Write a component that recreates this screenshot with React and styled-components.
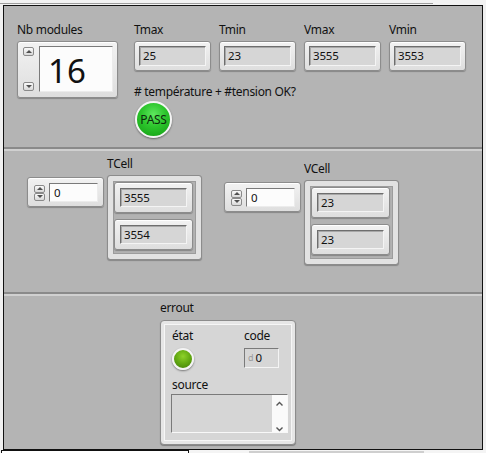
import React from "react";
import styled, { createGlobalStyle } from "styled-components";

const Global = createGlobalStyle`
  html, body { margin: 0; padding: 0; background: #f0f0f0; }
  body { font-family: "Noto Sans", "Open Sans", Arial, sans-serif; font-size: 12px; color: #111; }
  * { box-sizing: border-box; }
`;

const TopStrip = styled.div`
  height: 5px;
  background: #f2f2f2;
  border-bottom: 1px solid #f2f2f2;
  &::before {
    content: "";
    display: block;
    height: 3px;
    border-bottom: 1px solid #9e9e9e;
    margin-right: 53px;
  }
`;

const Frame = styled.div`
  margin-left: 3px;
  width: 480px;
  border: 1px solid #111;
  background: #b4b4b4;
  display: flex;
  flex-direction: column;
`;

const Pane = styled.div`
  height: ${(p) => p.$h}px;
  display: flex;
  align-items: flex-start;
  padding: ${(p) => p.$pad};
`;

const Splitter = styled.div`
  height: 4px;
  border-top: 2px solid #8a8a8a;
  background: #d0d0d0;
`;

const Label = styled.div`
  font-size: 12px;
  letter-spacing: -0.3px;
  line-height: 14px;
  height: 14px;
  white-space: nowrap;
  color: #111;
`;

const Group = styled.div`
  display: flex;
  flex-direction: column;
  gap: ${(p) => p.$gap ?? 4}px;
  margin-top: ${(p) => p.$mt ?? 0}px;
  margin-left: ${(p) => p.$ml ?? 0}px;
`;

const ControlFrame = styled.div`
  width: ${(p) => p.$w}px;
  height: ${(p) => p.$h}px;
  padding: ${(p) => p.$pad ?? "4px"};
  border: 1px solid #8c8c8c;
  border-radius: 3px;
  background: linear-gradient(#f2f2f2, #dedede);
  box-shadow: inset 0 1px 0 #ffffff, 0 1px 1px rgba(0, 0, 0, 0.25);
  display: flex;
  align-items: stretch;
  gap: ${(p) => p.$gap ?? 0}px;
`;

const IndicatorField = styled.div`
  flex: 1;
  background: #d6d6d6;
  border: 1px solid #6e6e6e;
  border-right-color: #f4f4f4;
  border-bottom-color: #f4f4f4;
  box-shadow: inset 1px 1px 0 #a8a8a8;
  font-size: 11.5px;
  letter-spacing: -0.2px;
  line-height: 18px;
  padding-left: 3px;
  color: #111;
`;

const ControlField = styled.div`
  flex: 1;
  background: #fcfcfc;
  border: 1px solid #7a7a7a;
  border-right-color: #ececec;
  border-bottom-color: #ececec;
  font-size: ${(p) => p.$fs ?? 11.5}px;
  line-height: ${(p) => p.$lh ?? 17}px;
  padding-left: ${(p) => p.$pl ?? 4}px;
  color: #111;
`;

const Spinner = styled.div`
  width: 13px;
  display: flex;
  flex-direction: column;
  justify-content: ${(p) => (p.$spread ? "space-between" : "center")};
  align-items: center;
  padding: ${(p) => (p.$spread ? "1px 0" : "0")};
`;

const SpinBtn = styled.div`
  width: 11px;
  height: ${(p) => p.$h ?? 9}px;
  border: 1px solid #8a8a8a;
  border-radius: 2px;
  background: linear-gradient(#fafafa, #d8d8d8);
  display: flex;
  align-items: center;
  justify-content: center;
  &::after {
    content: "";
    width: 0;
    height: 0;
    border-left: 3px solid transparent;
    border-right: 3px solid transparent;
    ${(p) =>
      p.$down
        ? "border-top: 3px solid #505050;"
        : "border-bottom: 3px solid #505050;"}
  }
`;

const Spin = ({ spread, h }) => (
  <Spinner $spread={spread}>
    <SpinBtn $h={h} />
    <SpinBtn $h={h} $down />
  </Spinner>
);

const Row = styled.div`
  display: flex;
  gap: ${(p) => p.$gap}px;
`;

const Led = styled.div`
  width: ${(p) => p.$size}px;
  height: ${(p) => p.$size}px;
  border-radius: 50%;
  border: 2px solid #f4f4f4;
  background: ${(p) => p.$bg};
  box-shadow: 0 1px 2px rgba(0, 0, 0, 0.45);
  display: flex;
  align-items: center;
  justify-content: center;
  font-size: 12px;
  letter-spacing: -0.3px;
  color: #0c2a0c;
  margin-left: ${(p) => p.$ml ?? 0}px;
`;

const ArrayFrame = styled.div`
  width: 95px;
  height: 85px;
  padding: 6px;
  border: 1px solid #8c8c8c;
  border-radius: 3px;
  background: #b2b2b2;
  box-shadow: inset 0 0 0 5px #e2e2e2, inset 0 0 0 6px #9c9c9c, 0 1px 1px rgba(0, 0, 0, 0.25);
  display: flex;
  flex-direction: column;
  gap: 6px;
`;

const ClusterFrame = styled.div`
  width: 136px;
  height: 125px;
  border: 1px solid #8c8c8c;
  border-radius: 4px;
  background: #d6d6d6;
  box-shadow: inset 0 0 0 3px #e6e6e6, inset 0 0 0 4px #f6f6f6, 0 1px 1px rgba(0, 0, 0, 0.3);
  padding: 8px 7px 0 11px;
  display: grid;
  grid-template-columns: 72px 1fr;
  grid-template-rows: auto auto;
  align-content: start;
  row-gap: 8px;
`;

const Cell = styled.div`
  display: flex;
  flex-direction: column;
  gap: ${(p) => p.$gap ?? 4}px;
  grid-column: ${(p) => p.$span ?? "auto"};
`;

const CodeField = styled.div`
  width: 35px;
  height: 20px;
  background: #d6d6d6;
  border: 1px solid #7a7a7a;
  border-right-color: #f4f4f4;
  border-bottom-color: #f4f4f4;
  font-size: 11.5px;
  line-height: 18px;
  padding-left: 3px;
  display: flex;
  gap: 2px;
`;

const Radix = styled.span`
  color: #9a9a9a;
  font-size: 9px;
`;

const SourceField = styled.div`
  width: 117px;
  height: 39px;
  margin-left: -1px;
  background: #d6d6d6;
  border: 1px solid #7a7a7a;
  border-right-color: #f8f8f8;
  border-bottom-color: #f8f8f8;
  display: flex;
  justify-content: flex-end;
`;

const ScrollBar = styled.div`
  width: 15px;
  background: #fafafa;
  display: flex;
  flex-direction: column;
  justify-content: space-between;
  align-items: center;
  padding: 6px 0 0;
  overflow: hidden;
`;

const Chevron = ({ down }) => (
  <svg width="9" height="6" viewBox="0 0 9 6">
    <path
      d={down ? "M1.5 1.5 L4.5 4.5 L7.5 1.5" : "M1.5 4.5 L4.5 1.5 L7.5 4.5"}
      fill="none"
      stroke="#555"
      strokeWidth="1.4"
    />
  </svg>
);

const BottomStrip = styled.div`
  height: 4px;
  display: flex;
  align-items: flex-start;
  background: #f4f4f4;
`;

const BottomBox = styled.div`
  margin-left: 1px;
  width: 188px;
  height: 4px;
  border: 1px solid #111;
  border-bottom: none;
  background: #fff;
`;

const BottomBar = styled.div`
  margin-left: 60px;
  margin-top: 1px;
  width: 175px;
  height: 3px;
  background: #cfcfcf;
`;

const Indicator = ({ label, value }) => (
  <Group $gap={4}>
    <Label>{label}</Label>
    <ControlFrame $w={77} $h={30}>
      <IndicatorField>{value}</IndicatorField>
    </ControlFrame>
  </Group>
);

const ElementBox = ({ value }) => (
  <ControlFrame $w={79} $h={31} $pad="5px">
    <IndicatorField>{value}</IndicatorField>
  </ControlFrame>
);

const IndexControl = ({ mt, ml }) => (
  <Group $mt={mt} $ml={ml}>
    <ControlFrame $w={77} $h={30} $pad="5px 5px 4px 5px" $gap={3}>
      <Spin h={8} />
      <ControlField>0</ControlField>
    </ControlFrame>
  </Group>
);

export default function App() {
  return (
    <>
      <Global />
      <TopStrip />
      <Frame>
        <Pane $h={141} $pad="17px 0 0 13px">
          <Group $gap={4}>
            <Label>Nb modules</Label>
            <ControlFrame $w={101} $h={57} $pad="4px 4px 5px 4px" $gap={4}>
              <Spin spread h={9} />
              <ControlField $fs={33} $lh={48} $pl={8}>16</ControlField>
            </ControlFrame>
          </Group>
          <Group $gap={0} $ml={16}>
            <Row $gap={8}>
              <Indicator label="Tmax" value="25" />
              <Indicator label="Tmin" value="23" />
              <Indicator label="Vmax" value="3555" />
              <Indicator label="Vmin" value="3553" />
            </Row>
            <Group $gap={2} $mt={14}>
              <Label>{"# température + #tension OK?"}</Label>
              <Led
                $size={37}
                $ml={1}
                $bg="radial-gradient(circle at 50% 35%, #5fe85f 0%, #2cc52c 45%, #129a12 100%)"
              >
                PASS
              </Led>
            </Group>
          </Group>
        </Pane>
        <Splitter />
        <Pane $h={141} $pad="0 0 0 23px">
          <IndexControl mt={26} />
          <Group $mt={6} $ml={3}>
            <Label>TCell</Label>
            <ArrayFrame>
              <ElementBox value="3555" />
              <ElementBox value="3554" />
            </ArrayFrame>
          </Group>
          <IndexControl mt={31} ml={22} />
          <Group $mt={11} $ml={3}>
            <Label>VCell</Label>
            <ArrayFrame>
              <ElementBox value="23" />
              <ElementBox value="23" />
            </ArrayFrame>
          </Group>
        </Pane>
        <Splitter />
        <Pane $h={153} $pad="5px 0 0 156px">
          <Group $gap={5}>
            <Label>errout</Label>
            <ClusterFrame>
              <Cell $gap={5}>
                <Label>état</Label>
                <Led
                  $size={22}
                  $bg="radial-gradient(circle at 50% 35%, #8ed22a 0%, #62a812 50%, #3f7a06 100%)"
                />
              </Cell>
              <Cell $gap={5}>
                <Label>code</Label>
                <CodeField>
                  <Radix>d</Radix>0
                </CodeField>
              </Cell>
              <Cell $span="1 / 3" $gap={2}>
                <Label>source</Label>
                <SourceField>
                  <ScrollBar>
                    <Chevron />
                    <Chevron down />
                  </ScrollBar>
                </SourceField>
              </Cell>
            </ClusterFrame>
          </Group>
        </Pane>
      </Frame>
      <BottomStrip>
        <BottomBox />
        <BottomBar />
      </BottomStrip>
    </>
  );
}
